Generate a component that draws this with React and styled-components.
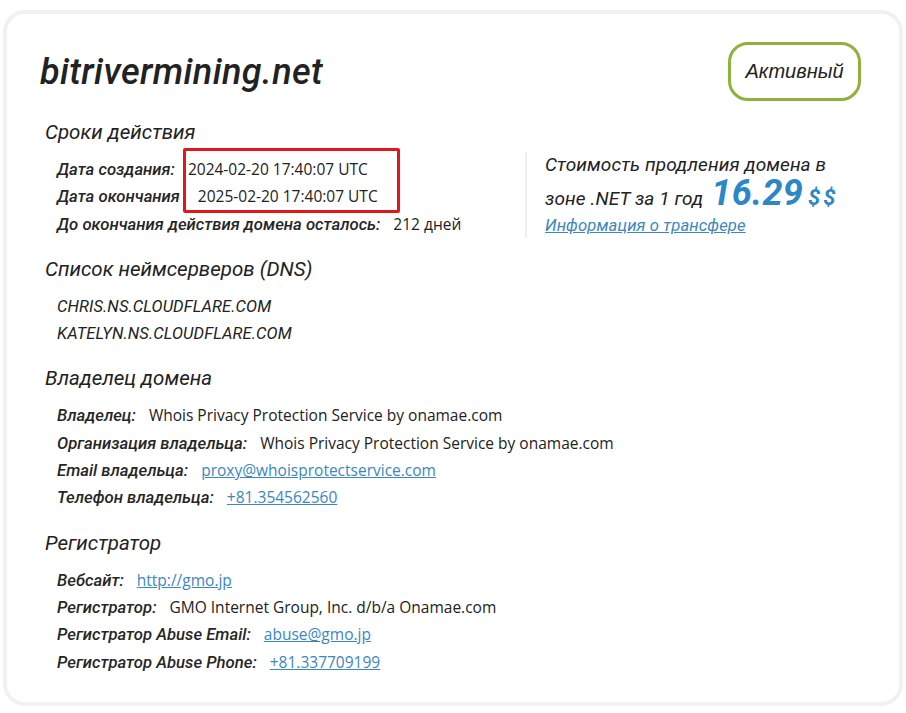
import styled, { createGlobalStyle } from "styled-components";

const GlobalStyle = createGlobalStyle`
  html, body {
    margin: 0;
    padding: 0;
    background: #ffffff;
  }
  body {
    font-family: "Open Sans", "Liberation Sans", sans-serif;
    color: #222;
  }
`;

const Page = styled.div`
  padding: 10px 3px 7px 3px;
`;

const Card = styled.div`
  border: 4px solid #f1f1f1;
  border-radius: 22px;
  background: #fff;
  height: 696px;
  box-sizing: border-box;
  padding: 28px 38px 0 33px;
`;

const Header = styled.div`
  display: flex;
  justify-content: space-between;
  align-items: center;
`;

const Title = styled.h1`
  margin: 0;
  font-family: "Roboto", sans-serif;
  font-style: italic;
  font-weight: 500;
  font-size: 36px;
  color: #222;
  letter-spacing: 0.4px;
`;

const Badge = styled.div`
  width: 133px;
  height: 59px;
  box-sizing: border-box;
  border: 3px solid #8fb23a;
  border-radius: 20px;
  display: flex;
  align-items: center;
  justify-content: center;
  font-family: "Liberation Sans", sans-serif;
  font-style: italic;
  font-size: 20px;
  color: #222;
`;

const Top = styled.div`
  display: flex;
  align-items: flex-start;
  margin-top: 17px;
`;

const LeftCol = styled.div`
  width: 485px;
`;

const Section = styled.section`
  margin-bottom: ${(p) => (p.last ? 0 : "17px")};
`;

const SectionTitle = styled.h2`
  margin: 0 0 10px 5px;
  font-family: "Roboto", sans-serif;
  font-style: italic;
  font-weight: 400;
  font-size: 20.5px;
  line-height: 28px;
  color: #222;
`;

const Rows = styled.div`
  position: relative;
  padding-left: 17px;
`;

const Row = styled.div`
  display: flex;
  align-items: baseline;
  height: 27.3px;
  line-height: 27.3px;
  white-space: nowrap;
`;

const Label = styled.span`
  font-family: "Roboto", sans-serif;
  font-style: italic;
  font-weight: 500;
  font-size: 16.7px;
  color: #262626;
`;

const Value = styled.span`
  margin-left: ${(p) => p.gap || 13}px;
  font-family: "Open Sans", sans-serif;
  font-size: 15.5px;
  color: #222;
`;

const Link = styled.a`
  margin-left: ${(p) => p.gap || 13}px;
  font-family: "Open Sans", sans-serif;
  font-size: 15.5px;
  color: #3b87bf;
  text-decoration: underline;
`;

const Ns = styled.div`
  height: 27.3px;
  font-family: "Roboto", sans-serif;
  font-style: italic;
  font-size: 16.5px;
  line-height: 27.3px;
  letter-spacing: 0.1px;
  color: #222;
`;

const Highlight = styled.div`
  position: absolute;
  left: 143px;
  top: -8px;
  width: 217px;
  height: 65px;
  box-sizing: border-box;
  border: 3px solid #e3151d;
  border-radius: 2px;
  pointer-events: none;
`;

const Price = styled.div`
  margin-top: 34px;
  border-left: 2px solid #eeeeee;
  padding-left: 18px;
  height: 86px;
  font-family: "Roboto", sans-serif;
  font-style: italic;
  font-size: 19px;
  letter-spacing: 0.1px;
  color: #222;
`;

const PriceLine = styled.div`
  line-height: 26px;
`;

const PriceRow = styled.div`
  display: flex;
  align-items: baseline;
  height: 34px;
  line-height: 30px;
`;

const Amount = styled.span`
  margin-left: 8px;
  font-size: 36px;
  font-weight: 700;
  color: #2b87c6;
  letter-spacing: 0.3px;
`;

const Currency = styled.span`
  margin-left: 5px;
  font-size: 22px;
  font-weight: 700;
  color: #2b87c6;
  letter-spacing: 3px;
`;

const Transfer = styled.a`
  display: block;
  margin-top: 4px;
  font-size: 16.7px;
  line-height: 20px;
  color: #3b87bf;
  text-decoration: underline;
`;

const Field = ({ label, value, link, gap }) => (
  <Row>
    <Label>{label}</Label>
    {link ? <Link gap={gap}>{value}</Link> : <Value gap={gap}>{value}</Value>}
  </Row>
);

export default function App() {
  return (
    <Page>
      <GlobalStyle />
      <Card>
        <Header>
          <Title>bitrivermining.net</Title>
          <Badge>Активный</Badge>
        </Header>

        <Top>
          <LeftCol>
            <Section>
              <SectionTitle>Сроки действия</SectionTitle>
              <Rows>
                <Field label="Дата создания:" value="2024-02-20 17:40:07 UTC" />
                <Field label="Дата окончания" value="2025-02-20 17:40:07 UTC" gap={18} />
                <Field label="До окончания действия домена осталось:" value="212 дней" />
                <Highlight />
              </Rows>
            </Section>
          </LeftCol>
          <Price>
            <PriceLine>Стоимость продления домена в</PriceLine>
            <PriceRow>
              зоне .NET за 1 год
              <Amount>16.29</Amount>
              <Currency>$$</Currency>
            </PriceRow>
            <Transfer>Информация о трансфере</Transfer>
          </Price>
        </Top>

        <Section>
          <SectionTitle>Список неймсерверов (DNS)</SectionTitle>
          <Rows>
            <Ns>CHRIS.NS.CLOUDFLARE.COM</Ns>
            <Ns>KATELYN.NS.CLOUDFLARE.COM</Ns>
          </Rows>
        </Section>

        <Section>
          <SectionTitle>Владелец домена</SectionTitle>
          <Rows>
            <Field label="Владелец:" value="Whois Privacy Protection Service by onamae.com" />
            <Field label="Организация владельца:" value="Whois Privacy Protection Service by onamae.com" />
            <Field label="Email владельца:" value="proxy@whoisprotectservice.com" link />
            <Field label="Телефон владельца:" value="+81.354562560" link />
          </Rows>
        </Section>

        <Section last>
          <SectionTitle>Регистратор</SectionTitle>
          <Rows>
            <Field label="Вебсайт:" value="http://gmo.jp" link />
            <Field label="Регистратор:" value="GMO Internet Group, Inc. d/b/a Onamae.com" />
            <Field label="Регистратор Abuse Email:" value="abuse@gmo.jp" link />
            <Field label="Регистратор Abuse Phone:" value="+81.337709199" link />
          </Rows>
        </Section>
      </Card>
    </Page>
  );
}
